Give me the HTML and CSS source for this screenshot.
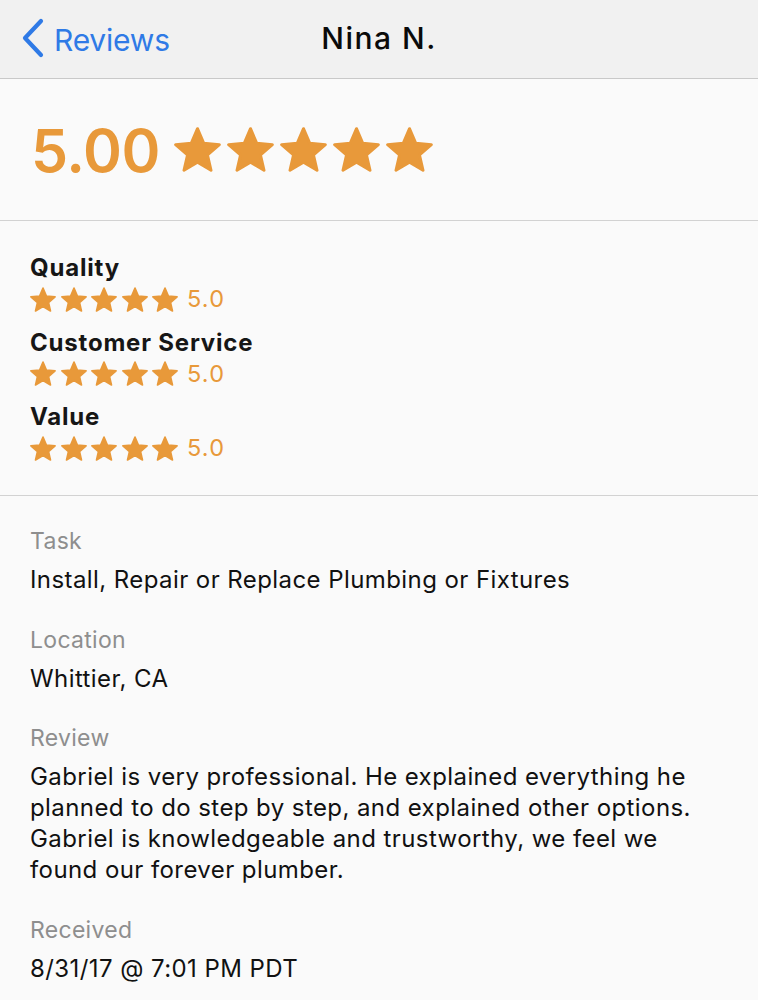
FILE: index.html
```html
<!DOCTYPE html>
<html lang="en">
<head>
<meta charset="utf-8">
<title>Nina N.</title>
<link rel="stylesheet" href="styles.css">
</head>
<body>
<svg class="defs" width="0" height="0" aria-hidden="true">
  <defs>
    <symbol id="star" viewBox="2 1 96 91">
      <polygon points="50,4 62.64,33.61 94.7,36.48 70.45,57.64 77.63,89.02 50,72.5 22.37,89.02 29.55,57.64 5.3,36.48 37.36,33.61" fill="currentColor" stroke="currentColor" stroke-width="6" stroke-linejoin="round"/>
    </symbol>
  </defs>
</svg>
<header class="navbar">
  <a class="back" href="#">
    <svg class="chevron" viewBox="0 0 24 40" width="24" height="40" aria-hidden="true"><path d="M20 3 L4 20 L20 37" fill="none" stroke="currentColor" stroke-width="4.2" stroke-linecap="round" stroke-linejoin="round"/></svg>
    <span>Reviews</span>
  </a>
  <h1 class="title">Nina N.</h1>
  <span class="spacer"></span>
</header>

<section class="overall">
  <span class="overall-score">5.00</span>
  <span class="stars stars-lg">
    <svg><use href="#star"/></svg><svg><use href="#star"/></svg><svg><use href="#star"/></svg><svg><use href="#star"/></svg><svg><use href="#star"/></svg>
  </span>
</section>

<section class="ratings">
  <div class="rating">
    <div class="rating-label">Quality</div>
    <div class="rating-row">
      <span class="stars stars-sm"><svg><use href="#star"/></svg><svg><use href="#star"/></svg><svg><use href="#star"/></svg><svg><use href="#star"/></svg><svg><use href="#star"/></svg></span>
      <span class="rating-value">5.0</span>
    </div>
  </div>
  <div class="rating">
    <div class="rating-label">Customer Service</div>
    <div class="rating-row">
      <span class="stars stars-sm"><svg><use href="#star"/></svg><svg><use href="#star"/></svg><svg><use href="#star"/></svg><svg><use href="#star"/></svg><svg><use href="#star"/></svg></span>
      <span class="rating-value">5.0</span>
    </div>
  </div>
  <div class="rating">
    <div class="rating-label">Value</div>
    <div class="rating-row">
      <span class="stars stars-sm"><svg><use href="#star"/></svg><svg><use href="#star"/></svg><svg><use href="#star"/></svg><svg><use href="#star"/></svg><svg><use href="#star"/></svg></span>
      <span class="rating-value">5.0</span>
    </div>
  </div>
</section>

<section class="details">
  <div class="field">
    <div class="field-label">Task</div>
    <div class="field-value">Install, Repair or Replace Plumbing or Fixtures</div>
  </div>
  <div class="field">
    <div class="field-label">Location</div>
    <div class="field-value">Whittier, CA</div>
  </div>
  <div class="field">
    <div class="field-label">Review</div>
    <div class="field-value">Gabriel is very professional. He explained everything he planned to do step by step, and explained other options. Gabriel is knowledgeable and trustworthy, we feel we found our forever plumber.</div>
  </div>
  <div class="field">
    <div class="field-label">Received</div>
    <div class="field-value">8/31/17 @ 7:01 PM PDT</div>
  </div>
</section>
</body>
</html>
```

FILE: styles.css
```css
* { box-sizing: border-box; }

html, body {
  margin: 0;
  padding: 0;
}

body {
  background: #fafafa;
  font-family: "Inter", "Noto Sans", sans-serif;
  color: #111;
  width: 758px;
  height: 1000px;
  overflow: hidden;
}

.defs {
  position: absolute;
  width: 0;
  height: 0;
}

.navbar {
  height: 79px;
  background: #f1f1f1;
  border-bottom: 1px solid #c9c9c9;
  display: grid;
  grid-template-columns: 1fr auto 1fr;
  align-items: center;
  padding: 0 0 3px 0;
}

.back {
  display: flex;
  align-items: center;
  color: #2f7ae6;
  text-decoration: none;
  font-size: 30px;
  padding-left: 21px;
  gap: 9px;
  letter-spacing: -0.2px;
}

.back span {
  position: relative;
  top: 2px;
}

.chevron {
  width: 24px;
  height: 40px;
}

.title {
  margin: 0;
  font-size: 30px;
  font-weight: 500;
  color: #0a0a0a;
  letter-spacing: 1.5px;
}

.overall {
  height: 142px;
  border-bottom: 1px solid #d2d2d2;
  display: flex;
  align-items: center;
  padding: 0 30px 0 31px;
  gap: 14px;
  color: #e8993a;
}

.overall-score {
  font-size: 59px;
  font-weight: 600;
  line-height: 1;
  position: relative;
  top: 1px;
  letter-spacing: -0.4px;
}

.stars {
  display: flex;
  color: #e8993a;
}

.stars-lg {
  gap: 6px;
}

.stars-lg svg {
  width: 47px;
  height: 45px;
}

.stars-sm {
  gap: 4.5px;
}

.stars-sm svg {
  width: 26px;
  height: 25px;
}

.ratings {
  border-bottom: 1px solid #d2d2d2;
  padding: 33px 30px 32px 30px;
  display: flex;
  flex-direction: column;
  gap: 14.5px;
}

.rating-label {
  font-size: 24px;
  font-weight: 700;
  line-height: 28px;
  color: #161616;
  letter-spacing: 0.8px;
}

.rating-row {
  display: flex;
  align-items: center;
  height: 30px;
  margin-top: 2px;
  gap: 9px;
}

.rating-value {
  font-size: 23.5px;
  color: #e8993a;
  line-height: 30px;
  letter-spacing: 1.2px;
}

.details {
  padding: 30px 30px 0 30px;
  display: flex;
  flex-direction: column;
  gap: 29.5px;
}

.field-label {
  font-size: 23px;
  line-height: 30px;
  color: #8e8e8e;
  letter-spacing: 0.3px;
}

.field-value {
  font-size: 24px;
  line-height: 31px;
  color: #111;
  margin-top: 8px;
  letter-spacing: 0.42px;
}
```
